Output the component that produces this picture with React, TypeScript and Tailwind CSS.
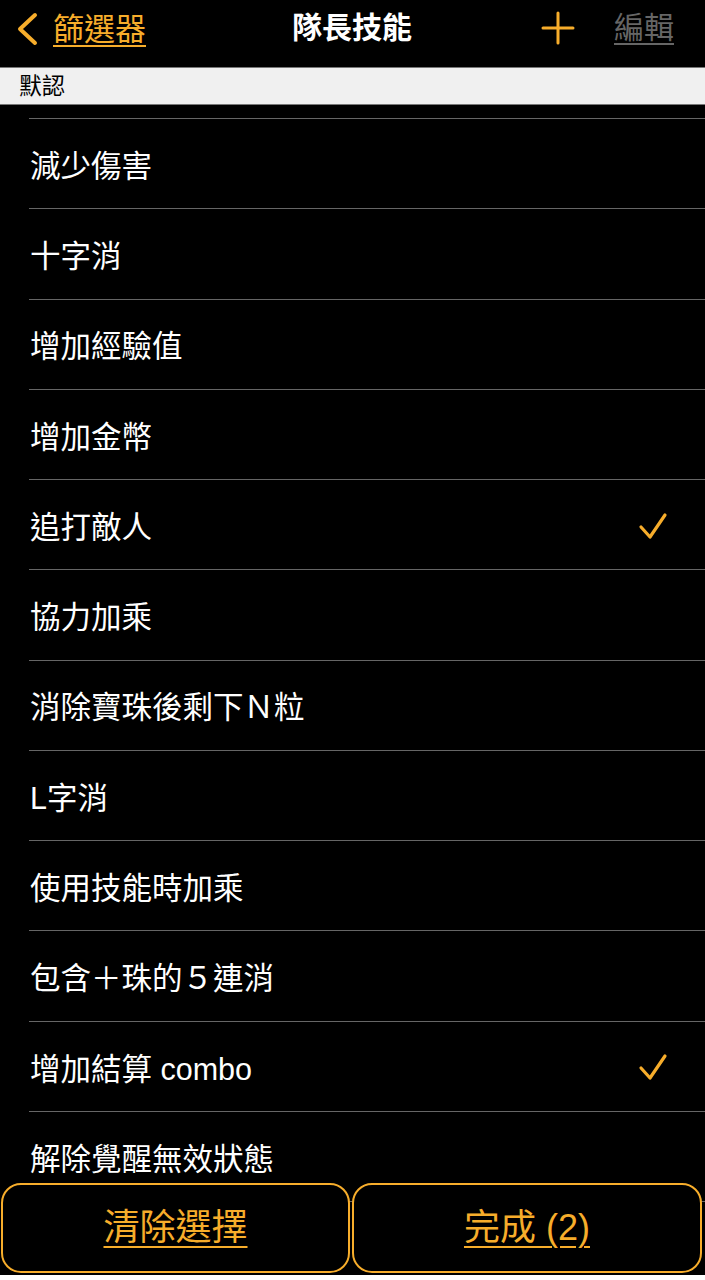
import React from "react";

const ORANGE = "#f7ad2b";

const items: { label: string; checked?: boolean }[] = [
  { label: "減少傷害" },
  { label: "十字消" },
  { label: "增加經驗值" },
  { label: "增加金幣" },
  { label: "追打敵人", checked: true },
  { label: "協力加乘" },
  { label: "消除寶珠後剩下Ｎ粒" },
  { label: "L字消" },
  { label: "使用技能時加乘" },
  { label: "包含＋珠的５連消" },
  { label: "增加結算 combo", checked: true },
  { label: "解除覺醒無效狀態" },
];

function Check() {
  return (
    <svg width="34" height="32" viewBox="0 0 34 32" fill="none">
      <path d="M7 18 L16 28 L31 6" stroke={ORANGE} strokeWidth="3.2" strokeLinecap="round" strokeLinejoin="round" />
    </svg>
  );
}

export default function App() {
  return (
    <div
      className="w-[705px] h-[1280px] bg-black flex flex-col overflow-hidden"
      style={{ fontFamily: '"Liberation Sans", "Noto Sans CJK TC", sans-serif' }}
    >
      {/* Header */}
      <div className="h-[67px] shrink-0 flex items-start relative">
        <div className="flex items-center pl-[15px] pt-[11px]">
          <svg width="24" height="36" viewBox="0 0 24 36" fill="none">
            <path d="M20 4 L5 18 L20 32" stroke={ORANGE} strokeWidth="4" strokeLinecap="round" strokeLinejoin="round" />
          </svg>
          <span className="ml-[14px] text-[31px] leading-none underline underline-offset-[5px] decoration-2" style={{ color: ORANGE }}>
            篩選器
          </span>
        </div>
        <div className="absolute left-0 right-0 top-0 h-[56px] flex items-center justify-center pointer-events-none">
          <span className="text-[30px] font-bold text-white leading-none ml-[-1px]">隊長技能</span>
        </div>
        <div className="ml-auto flex items-center pr-[31px] pt-[11px]">
          <svg width="34" height="34" viewBox="0 0 34 34" fill="none">
            <path d="M17 2 V32 M2 17 H32" stroke={ORANGE} strokeWidth="3" strokeLinecap="round" />
          </svg>
          <span className="ml-[39px] text-[30px] leading-none text-[#666666] underline underline-offset-[5px] decoration-2">
            編輯
          </span>
        </div>
      </div>

      {/* Section header */}
      <div className="h-[38px] shrink-0 bg-[#f0f0f0] border-t border-b border-[#777] flex items-center pl-[19px]">
        <span className="text-[23px] text-black leading-none">默認</span>
      </div>

      {/* List */}
      <div className="flex-1 overflow-hidden relative">
        <div className="h-[14px] border-b border-[#666] ml-[29px]" />
        {items.map((it, i) => (
          <div key={i} className="h-[90.27px] ml-[29px] border-b border-[#666] flex items-center pr-[37px]">
            <span className="text-[30.5px] text-white leading-none pl-[1px] mt-[5px]">{it.label}</span>
            {it.checked && (
              <div className="ml-auto">
                <Check />
              </div>
            )}
          </div>
        ))}
        {/* Bottom buttons */}
        <div className="absolute left-0 right-0 top-[1078px] flex gap-[2px] px-[1px]">
          <button className="w-[349px] h-[90px] rounded-[20px] border-2 bg-black flex items-center justify-center" style={{ borderColor: ORANGE }}>
            <span className="text-[36px] leading-none underline underline-offset-[6px] decoration-2" style={{ color: ORANGE }}>
              清除選擇
            </span>
          </button>
          <button className="w-[350px] h-[90px] rounded-[20px] border-2 bg-black flex items-center justify-center" style={{ borderColor: ORANGE }}>
            <span className="text-[36px] leading-none underline underline-offset-[6px] decoration-2" style={{ color: ORANGE }}>
              完成 (2)
            </span>
          </button>
        </div>
      </div>
      <div className="h-[5px] shrink-0 bg-white" />
    </div>
  );
}
